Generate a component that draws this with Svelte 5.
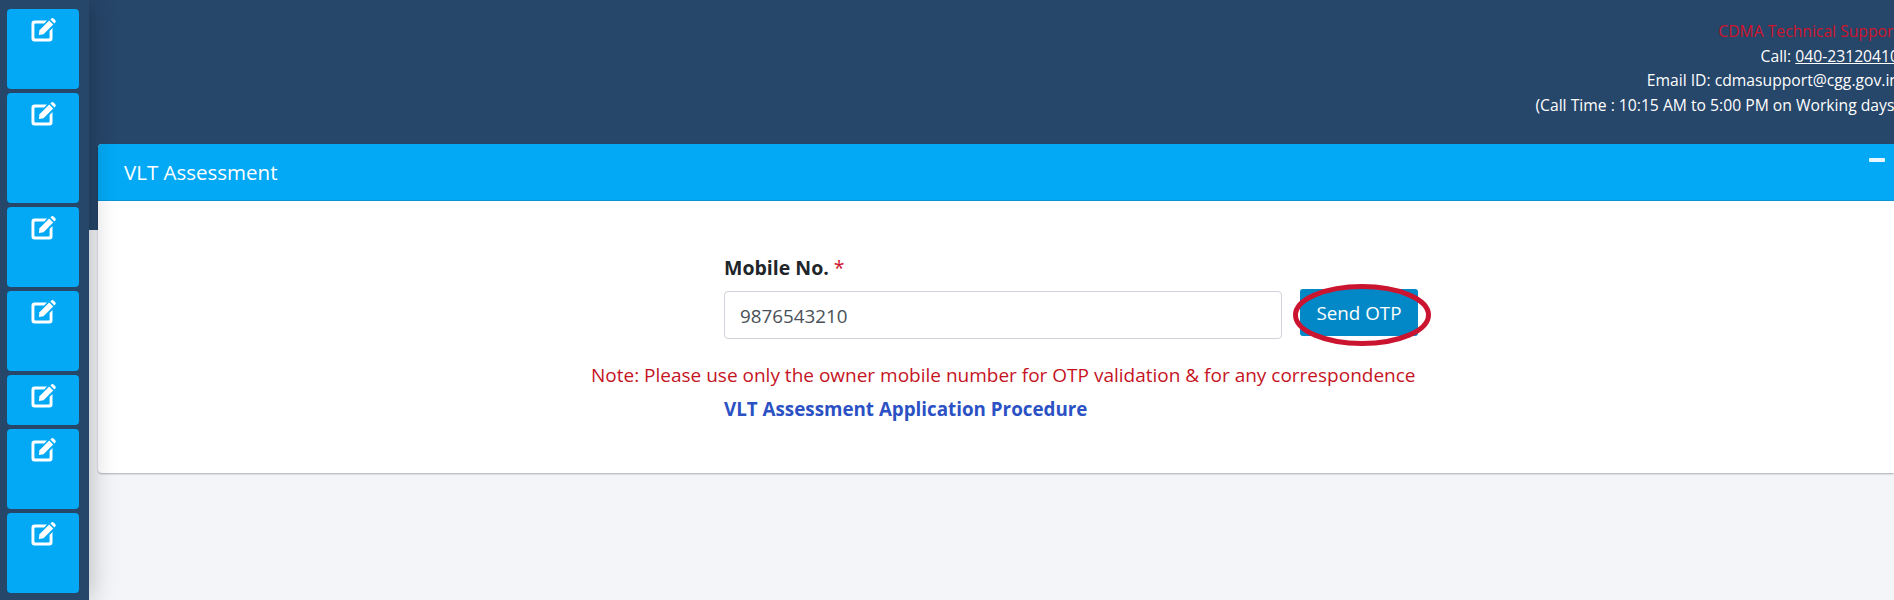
<script>
    const tiles = [80, 110, 80, 80, 50, 80, 80];
</script>

<div class="page">
    <nav class="sidebar">
        {#each tiles as h}
            <a class="tile" href="#top" style="height: {h}px" aria-label="Edit">
                <svg class="edit" viewBox="0 0 26 24" width="26" height="24">
                    <path d="M3.500 2.500h12.500l-2.900 2.900H4.400a1 1 0 0 0-1 1v13.200a1 1 0 0 0 1 1h13.200a1 1 0 0 0 1-1v-6.700l2.900-2.900v10.500a3 3 0 0 1-3 3H3.500a3 3 0 0 1-3-3V5.500a3 3 0 0 1 3-3z" fill="#fff"/>
                    <path d="M8.500 12.300 18.200 2.600l4 4-9.700 9.700-4.600.8z" fill="#fff"/>
                    <path d="M19.400 1.400l.7-.7a1.900 1.900 0 0 1 2.700 0l1.300 1.300a1.900 1.900 0 0 1 0 2.700l-.7.700z" fill="#fff"/>
                </svg>
            </a>
        {/each}
    </nav>

    <main class="main">
        <header class="topbar">
            <div class="support">
                <div class="red">CDMA Technical Support</div>
                <div>Call: <u>040-23120410</u></div>
                <div>Email ID: cdmasupport@cgg.gov.in</div>
                <div>(Call Time : 10:15 AM to 5:00 PM on Working days)</div>
            </div>
        </header>

        <section class="card">
            <div class="card-head">
                <h3>VLT Assessment</h3>
                <span class="minus"></span>
            </div>
            <div class="card-body">
                <label for="mobile">Mobile No. <span class="star">*</span></label>
                <div class="row">
                    <input id="mobile" type="text" value="9876543210" />
                    <div class="btn-wrap">
                        <button type="button">Send OTP</button>
                        <svg class="ring" viewBox="0 0 138 62" width="138" height="62">
                            <ellipse cx="69" cy="31" rx="66.500" ry="28.500" fill="none" stroke="#cb1530" stroke-width="5"/>
                        </svg>
                    </div>
                </div>
                <p class="note">Note: Please use only the owner mobile number for OTP validation &amp; for any correspondence</p>
                <a class="procedure" href="#top">VLT Assessment Application Procedure</a>
            </div>
        </section>
    </main>
</div>

<style>
    :global(body) {
        margin: 0;
        font-family: "Open Sans", "Noto Sans", sans-serif;
    }

    .page {
        display: flex;
        width: 1894px;
        height: 600px;
        overflow: hidden;
        background: #f4f5f9;
    }

    .sidebar {
        position: relative;
        z-index: 2;
        flex: 0 0 89px;
        box-sizing: border-box;
        display: flex;
        flex-direction: column;
        gap: 4px;
        padding: 9px 10px 0 7px;
        background: #26466a;
        box-shadow: 0 0 26px rgba(0, 0, 0, 0.28);
    }

    .tile {
        display: flex;
        justify-content: center;
        align-items: flex-start;
        flex: none;
        padding-top: 9px;
        box-sizing: border-box;
        border-radius: 4px;
        background: #03a9f4;
    }

    .edit {
        margin-left: 1px;
    }

    .main {
        flex: 1;
        min-width: 0;
        background: linear-gradient(#26466a 230px, #f4f5f9 230px);
    }

    .topbar {
        box-sizing: border-box;
        height: 144px;
        padding: 19px 0 0;
        margin-right: -5px;
        color: #fff;
        font-size: 15.700px;
        line-height: 24.500px;
        text-align: right;
        white-space: nowrap;
    }

    .red {
        color: #d0142c;
    }

    .card {
        margin-left: 9px;
        height: 329px;
        border-radius: 4px 0 0 4px;
        background: #fff;
        box-shadow: 0 1px 2px rgba(0, 0, 0, 0.3);
    }

    .card-head {
        display: flex;
        justify-content: space-between;
        box-sizing: border-box;
        height: 57px;
        padding: 15px 9px 0 26px;
        border-bottom: 1px solid #0a94d6;
        border-radius: 4px 0 0 0;
        background: #03a9f4;
        color: #fff;
    }

    h3 {
        margin: 0;
        font-size: 20.500px;
        font-weight: 400;
        line-height: 27px;
    }

    .minus {
        width: 16px;
        height: 4px;
        margin-top: -1px;
        border-radius: 1px;
        background: #e8f7ff;
    }

    .card-body {
        padding: 54px 0 0 626px;
    }

    label {
        display: block;
        color: #212529;
        font-size: 19.500px;
        font-weight: 700;
        line-height: 26px;
    }

    .star {
        color: #d0142c;
        font-weight: 400;
    }

    .row {
        display: flex;
        align-items: flex-start;
        gap: 18px;
        margin-top: 10px;
    }

    input {
        box-sizing: border-box;
        width: 558px;
        height: 48px;
        padding: 2px 15px 0;
        border: 1px solid #ced4da;
        border-radius: 4px;
        color: #495057;
        font: 18.800px "Open Sans", sans-serif;
    }

    .btn-wrap {
        position: relative;
        margin-top: -2px;
    }

    button {
        display: block;
        box-sizing: border-box;
        width: 118px;
        height: 47px;
        padding: 0;
        border: 0;
        border-radius: 3px;
        background: #0288c7;
        color: #fff;
        font: 18.800px "Open Sans", sans-serif;
    }

    .ring {
        position: absolute;
        left: -7px;
        top: -5px;
    }

    .note {
        margin: 23px 0 0 -133px;
        color: #c5141f;
        font-size: 19px;
        line-height: 26px;
        white-space: nowrap;
    }

    .procedure {
        display: block;
        margin-top: 8px;
        color: #2b51c4;
        font-size: 18.800px;
        font-weight: 700;
        line-height: 26px;
        text-decoration: none;
    }
</style>
